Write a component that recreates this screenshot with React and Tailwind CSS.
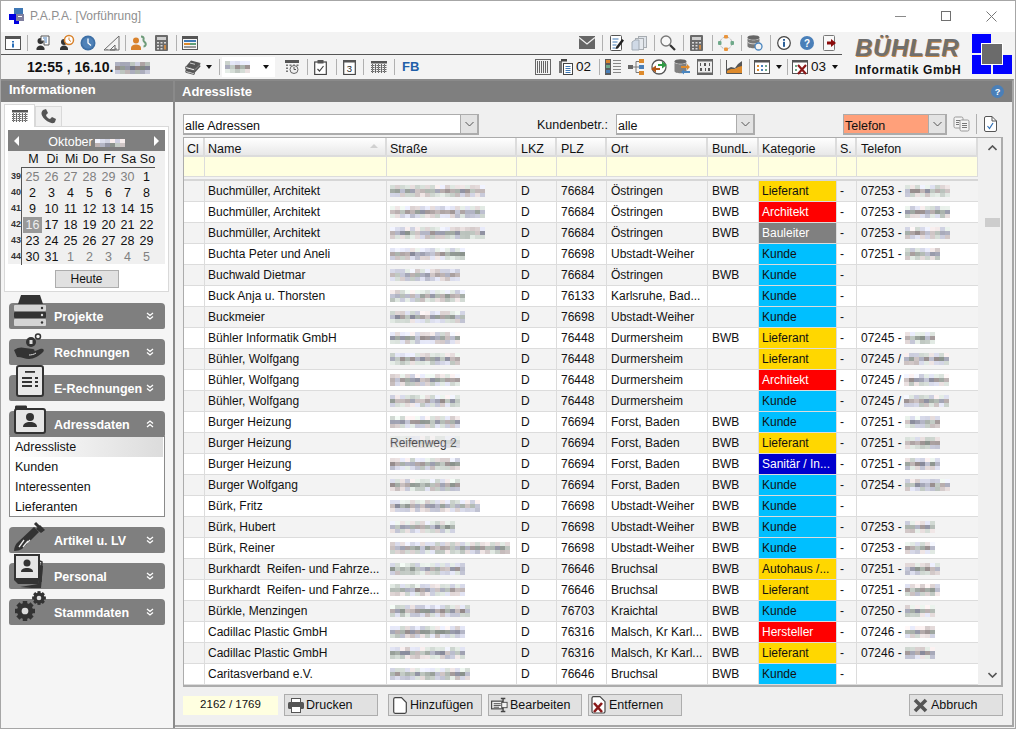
import React from 'react';

const COLS = [
  'w-[21px]', 'w-[182px]', 'w-[130px]', 'w-[40px]', 'w-[50px]',
  'w-[101px]', 'w-[51px]', 'w-[78px]', 'w-[20px]', 'w-[121px]',
];
const PADS = ['pl-[3px]', 'pl-[3px]', 'pl-[3px]', 'pl-[4px]', 'pl-[4px]', 'pl-[4px]', 'pl-[4px]', 'pl-[3px]', 'pl-[3px]', 'pl-[4px]'];
const HEADS = ['Cl', 'Name', 'Straße', 'LKZ', 'PLZ', 'Ort', 'BundL.', 'Kategorie', 'S.', 'Telefon'];

const KAT = {
  L: { label: 'Lieferant', cls: 'bg-[#ffd700] text-[#111]' },
  A: { label: 'Architekt', cls: 'bg-[#ff0000] text-white' },
  B: { label: 'Bauleiter', cls: 'bg-[#808080] text-white' },
  K: { label: 'Kunde', cls: 'bg-[#00bfff] text-[#111]' },
  S: { label: 'Sanitär / In...', cls: 'bg-[#0000cd] text-white' },
  H: { label: 'Autohaus /...', cls: 'bg-[#ffd700] text-[#111]' },
  R: { label: 'Hersteller', cls: 'bg-[#ff0000] text-white' },
};

const ROWS = [
  ['Buchmüller, Architekt', 95, '76684', 'Östringen', 'BWB', 'L', '07253 -', 45],
  ['Buchmüller, Architekt', 95, '76684', 'Östringen', 'BWB', 'A', '07253 -', 45],
  ['Buchmüller, Architekt', 95, '76684', 'Östringen', 'BWB', 'B', '07253 -', 45],
  ['Buchta Peter und Aneli', 75, '76698', 'Ubstadt-Weiher', '', 'K', '07251 -', 35],
  ['Buchwald Dietmar', 70, '76684', 'Östringen', 'BWB', 'K', '', 0],
  ['Buck Anja u. Thorsten', 75, '76133', 'Karlsruhe, Bad...', '', 'K', '', 0],
  ['Buckmeier', 75, '76698', 'Ubstadt-Weiher', '', 'K', '', 0],
  ['Bühler Informatik GmbH', 70, '76448', 'Durmersheim', 'BWB', 'L', '07245 -', 30],
  ['Bühler, Wolfgang', 70, '76448', 'Durmersheim', '', 'L', '07245 /', 45],
  ['Bühler, Wolfgang', 70, '76448', 'Durmersheim', '', 'A', '07245 /', 45],
  ['Bühler, Wolfgang', 70, '76448', 'Durmersheim', '', 'K', '07245 /', 45],
  ['Burger Heizung', 70, '76694', 'Forst, Baden', 'BWB', 'K', '07251 -', 35],
  ['Burger Heizung', 70, '76694', 'Forst, Baden', 'BWB', 'L', '07251 -', 35],
  ['Burger Heizung', 70, '76694', 'Forst, Baden', 'BWB', 'S', '07251 -', 35],
  ['Burger Wolfgang', 70, '76694', 'Forst, Baden', 'BWB', 'K', '07254 -', 45],
  ['Bürk, Fritz', 90, '76698', 'Ubstadt-Weiher', 'BWB', 'K', '', 0],
  ['Bürk, Hubert', 65, '76698', 'Ubstadt-Weiher', 'BWB', 'K', '07253 -', 30],
  ['Bürk, Reiner', 120, '76698', 'Ubstadt-Weiher', 'BWB', 'K', '07253 -', 30],
  ['Burkhardt  Reifen- und Fahrze...', 75, '76646', 'Bruchsal', 'BWB', 'H', '07251 -', 35],
  ['Burkhardt  Reifen- und Fahrze...', 75, '76646', 'Bruchsal', 'BWB', 'L', '07251 -', 35],
  ['Bürkle, Menzingen', 80, '76703', 'Kraichtal', 'BWB', 'K', '07250 -', 30],
  ['Cadillac Plastic GmbH', 75, '76316', 'Malsch, Kr Karl...', 'BWB', 'R', '07246 -', 30],
  ['Cadillac Plastic GmbH', 75, '76316', 'Malsch, Kr Karl...', 'BWB', 'L', '07246 -', 30],
  ['Caritasverband e.V.', 80, '76646', 'Bruchsal', 'BWB', 'K', '', 0],
];

const WEEKS = [
  [39, [25, 26, 27, 28, 29, 30, 1]],
  [40, [2, 3, 4, 5, 6, 7, 8]],
  [41, [9, 10, 11, 12, 13, 14, 15]],
  [42, [16, 17, 18, 19, 20, 21, 22]],
  [43, [23, 24, 25, 26, 27, 28, 29]],
  [44, [30, 31, 1, 2, 3, 4, 5]],
];

// pixelated stand-in for the censored text
function Mosaic({ w, seed = 1, h = 3, dark = false }) {
  const cols = Math.round(w / 5);
  const cells = [];
  for (let y = 0; y < h; y++) {
    for (let x = 0; x < cols; x++) {
      const n = Math.abs(Math.sin((x + 1) * 12.9898 + (y + 1) * 78.233 + seed * 3.7) * 43758.5453) % 1;
      const mid = y === 1;
      const base = dark ? (mid ? 95 : 165) : mid ? 140 : y === 0 ? 205 : 190;
      const spread = mid ? 60 : 45;
      const v = Math.round(base + n * spread);
      const tint = Math.round(n * 100) % 3;
      const r = v + (tint === 0 ? 8 : -4);
      const g = v + (tint === 2 ? 4 : -2);
      const b = v + (tint === 1 ? 14 : -2);
      cells.push(<span key={`${x}-${y}`} className="block w-[5px] h-[4px]" style={{ background: `rgb(${r},${g},${b})` }} />);
    }
  }
  return (
    <span className="inline-grid align-middle" style={{ gridTemplateColumns: `repeat(${cols}, 5px)` }}>
      {cells}
    </span>
  );
}

function Sep({ className = '' }) {
  return <span className={`block w-px h-[16px] bg-[#b0b0b0] shrink-0 ${className}`} />;
}

function Ico({ className = '', children, vb = '0 0 16 16' }) {
  return (
    <svg viewBox={vb} className={`block shrink-0 ${className}`} fill="none">
      {children}
    </svg>
  );
}

const Caret = ({ className = '' }) => (
  <span className={`block w-0 h-0 border-l-[3.5px] border-r-[3.5px] border-t-[4px] border-l-transparent border-r-transparent border-t-[#111] shrink-0 ${className}`} />
);

/* ---- toolbar icons ---- */
const Win = () => (
  <Ico className="w-[16px] h-[14px]" vb="0 0 16 14">
    <rect x=".5" y=".5" width="15" height="13" fill="#fff" stroke="#555" />
    <rect x="0" y="0" width="16" height="3" fill="#555" />
    <rect x="7" y="5" width="2" height="1.5" fill="#2a6fb8" />
    <rect x="7" y="7.5" width="2" height="4" fill="#2a6fb8" />
  </Ico>
);
const PersonDoc = ({ accent = '#4a7fb8' }) => (
  <Ico className="w-[16px] h-[17px]" vb="0 0 16 17">
    <circle cx="5.5" cy="7" r="3" fill="#333" />
    <path d="M1.5 16v-1.5c0-1.5 2-3 4-3s4 1.500 4 3V16z" fill="#333" />
    <path d="M6 2h8v9H9V7H6z" fill="#fff" stroke="#555" />
    <path d="M8 4h4M9 6h3M10 8h2" stroke={accent} />
  </Ico>
);
const PersonClock = () => (
  <Ico className="w-[16px] h-[17px]" vb="0 0 16 17">
    <circle cx="5" cy="8" r="3" fill="#333" />
    <path d="M1 16v-1.500c0-1.500 2-3 4-3s4 1.500 4 3V16z" fill="#333" />
    <circle cx="10" cy="6" r="4.500" fill="#fff" stroke="#d9822b" strokeWidth="1.500" />
    <path d="M10 3.500V6l2 1.500" stroke="#d9822b" />
  </Ico>
);
const Clock = () => (
  <Ico className="w-[16px] h-[16px]">
    <circle cx="8" cy="8" r="7.500" fill="#3d6fa5" />
    <circle cx="8" cy="8" r="5.800" fill="#4f82b8" />
    <path d="M8 3.500V8l3 2.500" stroke="#fff" strokeWidth="1.300" />
  </Ico>
);
const Ruler = () => (
  <Ico className="w-[17px] h-[16px]" vb="0 0 17 16">
    <path d="M1 15L16 1v14z" stroke="#6a6a6a" />
    <path d="M7 15l5-5v5z" stroke="#6a6a6a" />
    <path d="M13 15v-2M10 15v-1M4 15v-1" stroke="#6a6a6a" />
  </Ico>
);
const PersonOrange = () => (
  <Ico className="w-[16px] h-[16px]">
    <circle cx="5" cy="5.500" r="3" fill="#d9822b" />
    <path d="M0 15v-2c0-2 2-3.500 5-3.500s5 1.500 5 3.500v2z" fill="#d9822b" />
    <path d="M10 1.500c2 0 3 1 2.500 3-.4 1.500.5 2 1.500 3 1.500 1.500.5 4-1.500 4" stroke="#6e9b7a" strokeWidth="2" />
  </Ico>
);
const Calc = ({ size = 'w-[13px] h-[16px]' }) => (
  <Ico className={size} vb="0 0 13 16">
    <rect x="0" y="0" width="13" height="16" rx="1" fill="#6a6a6a" />
    <rect x="2" y="2" width="9" height="3" fill="#cfcfcf" />
    <path d="M2 7h2v1.500H2zM5.500 7h2v1.500h-2zM9 7h2v1.500H9zM2 10h2v1.500H2zM5.500 10h2v1.500h-2zM2 13h2v1.500H2zM5.500 13h2v1.500h-2z" fill="#d8d8d8" />
    <path d="M9 10h2v4.500H9z" fill="#c98a4a" />
  </Ico>
);
const Planner = () => (
  <Ico className="w-[16px] h-[14px]" vb="0 0 16 14">
    <rect x=".5" y=".5" width="15" height="13" fill="#f6f6f6" stroke="#555" />
    <rect x="0" y="0" width="16" height="3" fill="#555" />
    <rect x="2" y="4" width="12" height="2" fill="#3e78b5" />
    <rect x="2" y="7" width="6" height="2" fill="#dd8a2c" />
    <rect x="8" y="7" width="6" height="2" fill="#5e9e78" />
    <rect x="2" y="10" width="12" height="2" fill="#999" />
  </Ico>
);
const Mail = () => (
  <Ico className="w-[16px] h-[13px]" vb="0 0 16 13">
    <rect width="16" height="13" fill="#666" />
    <path d="M0 1.500L8 8l8-6.500" stroke="#f3f3f3" strokeWidth="1.200" />
  </Ico>
);
const NoteEdit = () => (
  <Ico className="w-[14px] h-[16px]" vb="0 0 14 16">
    <rect x=".5" y=".5" width="11" height="15" rx="1" fill="#fff" stroke="#555" />
    <path d="M2.500 4h6M2.500 7h5M2.500 10h4M2.500 13h3" stroke="#3e78b5" />
    <path d="M6 12L12 4l2 1.500L8 13.500 5.500 14z" fill="#222" />
  </Ico>
);
const Copies = () => (
  <Ico className="w-[16px] h-[16px]">
    <rect x="7.500" y="1.500" width="8" height="11" fill="#dfe4ea" stroke="#a7acb1" />
    <rect x="4.500" y="3.500" width="8" height="11" fill="#e5e9ee" stroke="#a7acb1" />
    <path d="M1 7l3-2h4v10H1z" fill="#cfd9e6" stroke="#a2abb5" />
  </Ico>
);
const Search = () => (
  <Ico className="w-[16px] h-[16px]">
    <circle cx="6" cy="6" r="5" fill="#f8f8f8" stroke="#777" strokeWidth="1.300" />
    <path d="M10 10l5 5" stroke="#333" strokeWidth="2.200" />
  </Ico>
);
const Ring = () => (
  <Ico className="w-[16px] h-[16px]">
    <circle cx="8" cy="8" r="6" stroke="#bcbcbc" strokeDasharray="3 1" />
    <rect x="6" y="0" width="4" height="3.500" rx="1" fill="#e8943c" />
    <rect x="6" y="12.500" width="4" height="3.500" rx="1" fill="#e8943c" />
    <rect x="0" y="6" width="3.500" height="4" rx="1" fill="#6fa98a" />
    <rect x="12.500" y="6" width="3.500" height="4" rx="1" fill="#6fa98a" />
  </Ico>
);
const DbRefresh = () => (
  <Ico className="w-[16px] h-[16px]">
    <ellipse cx="6.500" cy="2.500" rx="6" ry="2.300" fill="#666" />
    <path d="M.5 3v8c0 1.300 2.700 2.300 6 2.300s6-1 6-2.300V3c0 1.300-2.700 2.300-6 2.300S.5 4.300.5 3z" fill="#777" />
    <path d="M.5 6.500c0 1.300 2.700 2.300 6 2.300s6-1 6-2.300" stroke="#ddd" />
    <circle cx="11.500" cy="11.500" r="3.500" fill="#f3f3f3" stroke="#4a86c0" strokeWidth="1.300" />
  </Ico>
);
const InfoC = () => (
  <Ico className="w-[14px] h-[14px]" vb="0 0 14 14">
    <circle cx="7" cy="7" r="6.300" stroke="#444" strokeWidth="1.200" fill="#fff" />
    <rect x="6" y="3" width="2" height="1.800" fill="#2a5f98" />
    <rect x="6" y="5.800" width="2" height="5" fill="#2a5f98" />
  </Ico>
);
const Help = ({ size = 'w-[14px] h-[14px]' }) => (
  <svg viewBox="0 0 14 14" className={`block shrink-0 ${size}`}>
    <circle cx="7" cy="7" r="7" fill="#4a7fb8" />
    <text x="7" y="10.500" textAnchor="middle" fontSize="10" fontWeight="700" fill="#fff" fontFamily="Liberation Sans, sans-serif">?</text>
  </svg>
);
const ExitI = () => (
  <Ico className="w-[13px] h-[16px]" vb="0 0 13 16">
    <rect x=".5" y=".5" width="11" height="15" rx="1" fill="#f8f8f8" stroke="#777" />
    <path d="M4 6.500h4V4l5 4-5 4V9.500H4z" fill="#8b0a0a" />
  </Ico>
);
const Books = () => (
  <Ico className="w-[16px] h-[15px]" vb="0 0 16 15">
    <path d="M6 .5L15.500 3 10 9 .8 6.500z" fill="#555" />
    <path d="M.8 6.500L10 9l-.8 1.800L.5 8.500z" fill="#eee" stroke="#444" strokeWidth=".8" />
    <path d="M15.500 3L10 9l-.8 1.800L15 5z" fill="#444" />
    <path d="M.5 8.500L9.200 10.800 15 5l.5 1.500L9.500 13 .8 10.700z" fill="#555" />
    <path d="M.8 10.700L9.500 13l-.4 1.500L.8 12.300z" fill="#eee" stroke="#444" strokeWidth=".8" />
    <path d="M5 3l5 1.300" stroke="#ccc" />
  </Ico>
);
const CalClock = () => (
  <Ico className="w-[15px] h-[14px]" vb="0 0 15 14">
    <rect x="0" y="0" width="14" height="3" fill="#555" />
    <path d="M1 4.500h2v1.500H1zM4.500 4.500h2v1.500h-2zM8 4.500h2v1.500H8zM11.500 4.500h2v1.500h-2zM1 7.500h2V9H1zM1 10.500h2V12H1z" fill="#777" />
    <circle cx="9" cy="9.500" r="4" fill="#eee" stroke="#666" />
    <path d="M9 7v2.500h2" stroke="#555" />
  </Ico>
);
const ClipCheck = () => (
  <Ico className="w-[13px] h-[15px]" vb="0 0 13 15">
    <rect x=".7" y="2" width="11.600" height="12.500" fill="#fff" stroke="#444" strokeWidth="1.200" />
    <rect x="3.500" y="0" width="6" height="3.500" fill="#555" />
    <path d="M3.500 9l2 2L9.500 6" stroke="#444" strokeWidth="1.200" />
  </Ico>
);
const Cal3 = () => (
  <svg viewBox="0 0 13 15" className="block w-[13px] h-[15px] shrink-0">
    <rect x=".7" y="1" width="11.600" height="13.500" fill="#fff" stroke="#444" strokeWidth="1.200" />
    <rect x="0" y="0" width="13" height="2.500" fill="#555" />
    <text x="6.500" y="12" textAnchor="middle" fontSize="9.500" fill="#222" fontFamily="Liberation Sans, sans-serif">3</text>
  </svg>
);
const Grid16 = () => (
  <Ico className="w-[16px] h-[12px]" vb="0 0 16 12">
    <rect width="16" height="2.500" fill="#555" />
    <path d="M0 4.500h16M0 6.500h16M0 8.500h16M0 10.500h16M1.500 3v9M4.500 3v9M7.500 3v9M10.500 3v9M13.500 3v9" stroke="#666" strokeDasharray="1.500 .5" />
  </Ico>
);
const Barcode = () => (
  <Ico className="w-[16px] h-[16px]">
    <rect x=".5" y=".5" width="15" height="15" stroke="#666" />
    <path d="M2.500 2v12M4.500 2v12M6.500 2v12M8.500 2v12M10.500 2v12M12.500 2v12" stroke="#666" />
  </Ico>
);
const ClipList = () => (
  <Ico className="w-[15px] h-[16px]" vb="0 0 15 16">
    <path d="M1 2h3v12H1z" fill="#777" />
    <rect x="3" y="0" width="6" height="2.500" fill="#444" />
    <rect x="5.500" y="4.500" width="9" height="11" fill="#fff" stroke="#444" />
    <path d="M7.500 7.500h5M7.500 9.500h5M7.500 11.500h5M7.500 13.500h5" stroke="#3e78b5" />
  </Ico>
);
const ListCol = () => (
  <Ico className="w-[16px] h-[16px]">
    <rect width="6" height="16" fill="#5c5c5c" />
    <rect x="1" y="1" width="4" height="3" fill="#d9822b" />
    <rect x="1" y="6" width="4" height="3" fill="#6fa98a" />
    <rect x="1" y="11" width="4" height="3" fill="#4a7fb8" />
    <path d="M8 1.500h8M8 4.500h8M8 7.500h8M8 10.500h8M8 13.500h8" stroke="#888" />
  </Ico>
);
const Tree = () => (
  <Ico className="w-[16px] h-[16px]">
    <rect x="0" y="6" width="5" height="4" fill="#666" />
    <path d="M5 8h3M8 2.500v11M8 2.500h3M8 8h3M8 13.500h3" stroke="#777" />
    <rect x="11" y="0" width="5" height="4" fill="#dd8a2c" />
    <rect x="11" y="6" width="5" height="4" fill="#4a7fb8" />
    <rect x="11" y="12" width="5" height="4" fill="#dd8a2c" />
  </Ico>
);
const GlobeSwap = () => (
  <Ico className="w-[16px] h-[16px]">
    <circle cx="8" cy="8" r="7" fill="#fff" stroke="#555" strokeWidth="1.300" />
    <path d="M7 5h4V2.500L16 6l-5 3.500V7H7z" fill="#2e9a44" />
    <path d="M9 9H5V6.500L0 10l5 3.500V11h4z" fill="#b45a1a" />
  </Ico>
);
const DbSwap = () => (
  <Ico className="w-[16px] h-[16px]">
    <ellipse cx="6.500" cy="2.500" rx="6" ry="2.300" fill="#666" />
    <path d="M.5 3v9c0 1.300 2.700 2.300 6 2.300s6-1 6-2.300V3c0 1.300-2.700 2.300-6 2.300S.5 4.300.5 3z" fill="#808080" />
    <path d="M7 7h6V5l3 3-3 3V9H7z" fill="#dd8a2c" />
    <path d="M16 12h-6v-1.500L7 13l3 2.500V14h6z" fill="#4a86c0" />
  </Ico>
);
const Binary = () => (
  <svg viewBox="0 0 16 16" className="block w-[16px] h-[16px] shrink-0">
    <rect x=".5" y=".5" width="15" height="15" fill="#ececec" stroke="#666" />
    <rect width="16" height="2.500" fill="#666" />
    <rect y="13.500" width="16" height="2.500" fill="#666" />
    <path d="M3 4h1v3H3zM7 4h2v3H7zM12 4h1v3h-1zM3 9h2v3H3zM8 9h1v3H8zM11 9h2v3h-2z" fill="#555" />
  </svg>
);
const AreaC = () => (
  <Ico className="w-[16px] h-[14px]" vb="0 0 16 14">
    <path d="M.5 0v13.500H16" stroke="#555" />
    <path d="M1 9l4-2 4 1 3-4 4-3v6l-4 1-4 1-3 1-4 1z" fill="#555" />
    <path d="M1 13V11l4-2 4 0 3-2 4-1v7z" fill="#dd8a2c" />
  </Ico>
);
const TableI = () => (
  <Ico className="w-[16px] h-[14px]" vb="0 0 16 14">
    <rect x=".5" y=".5" width="15" height="13" fill="#fff" stroke="#555" />
    <rect width="16" height="2.500" fill="#555" />
    <path d="M3 5h2v2H3zM3 9h2v2H3z" fill="#dd8a2c" />
    <path d="M7 5h2v2H7zM7 9h2v2H7z" fill="#4a7fb8" />
    <path d="M11 5h2v2h-2zM11 9h2v2h-2z" fill="#6fa98a" />
  </Ico>
);
const TableX = () => (
  <Ico className="w-[16px] h-[15px]" vb="0 0 16 15">
    <rect x=".5" y=".5" width="15" height="13" fill="#fff" stroke="#555" />
    <rect width="16" height="2.500" fill="#555" />
    <path d="M3 5h2v2H3zM3 9h2v2H3z" fill="#6fa98a" />
    <path d="M6 5l8 9M14 5l-8 9" stroke="#8b1a1a" strokeWidth="2.200" />
  </Ico>
);

/* ---- sidebar icons ---- */
const SideProjekte = () => (
  <Ico className="w-[32px] h-[32px]" vb="0 0 32 32">
    <path d="M4 9L7 0h19l3 9z" fill="#333" />
    <rect x="0" y="10" width="32" height="6" rx="1" fill="#d4d4d4" />
    <rect x="0" y="17" width="32" height="6" rx="1" fill="#333" />
    <rect x="0" y="24" width="32" height="7" rx="1" fill="#d4d4d4" />
    <circle cx="28" cy="13" r="1.200" fill="#333" />
    <circle cx="28" cy="20" r="1.200" fill="#ddd" />
    <circle cx="28" cy="27.500" r="1.200" fill="#333" />
  </Ico>
);
const SideRechnung = () => (
  <Ico className="w-[34px] h-[30px]" vb="0 0 34 30">
    <circle cx="17" cy="9" r="5" fill="#333" />
    <rect x="15.500" y="7" width="3" height="4" fill="#ddd" />
    <circle cx="24" cy="3.500" r="2.500" stroke="#333" strokeWidth="1.500" />
    <path d="M0 17c4-3 8-3 11-2l8 1c2 0 2 3 0 3h-5c5 0 8-1 12-3 3-1 5 1 3 3-4 4-9 7-14 7-4 0-7-2-12-2H3z" fill="#333" />
    <path d="M15 22c2 0 5-.5 7-2" stroke="#ddd" />
  </Ico>
);
const SideERech = () => (
  <Ico className="w-[28px] h-[32px]" vb="0 0 28 32">
    <rect x="1" y="1" width="26" height="30" rx="2" fill="#e8e8e8" stroke="#333" strokeWidth="2" />
    <rect x="9" y="6" width="10" height="1.800" fill="#333" />
    <path d="M6 12h10v2H6zM6 16h10v2H6zM6 20h10v2H6z" fill="#333" />
    <path d="M19 12h3v2h-3zM19 16h3v2h-3zM19 20h3v2h-3z" fill="#333" />
  </Ico>
);
const SideAdress = () => (
  <Ico className="w-[32px] h-[29px]" vb="0 0 32 29">
    <path d="M1 4V2c0-1 .5-1.500 1.500-1.500h9C12.500.5 13 1 13 2v2z" fill="#333" />
    <rect x="1" y="4" width="30" height="24" rx="2" fill="#e6e6e6" stroke="#333" strokeWidth="2" />
    <circle cx="16" cy="12" r="4" fill="#333" />
    <path d="M9 22c0-3.500 3-5 7-5s7 1.500 7 5z" fill="#333" />
  </Ico>
);
const SideArtikel = () => (
  <Ico className="w-[32px] h-[31px]" vb="0 0 32 31">
    <path d="M0 31c0-4 2-7 3-8L20 7l5 5L8 29c-2 1-5 2-8 2z" fill="#333" />
    <path d="M5 27l5-7M9 27l5-6M13 23l3-3" stroke="#e8e8e8" strokeWidth="1.300" />
    <path d="M21 3l8 8" stroke="#333" strokeWidth="3" />
    <path d="M22 9l4-4 5 5-4 3z" fill="#333" />
  </Ico>
);
const SidePersonal = () => (
  <Ico className="w-[30px] h-[35px]" vb="0 0 30 35">
    <path d="M6 33c8 1 16 1 21 1l2-22-3-1-2 19z" fill="#333" />
    <path d="M26 7l2 1-1 20" stroke="#333" strokeWidth="1.500" />
    <rect x="1" y="1" width="24" height="24" fill="#e6e6e6" stroke="#333" strokeWidth="2" />
    <circle cx="13" cy="9" r="3.500" fill="#333" />
    <path d="M7 18c0-3 2.500-4 6-4s6 1 6 4z" fill="#333" />
    <path d="M0 26h25l-1 4H4z" fill="#333" />
  </Ico>
);
const Gear = ({ cx, cy, r }) => {
  const teeth = [0, 45, 90, 135].map((a) => (
    <rect key={a} x={cx - r * 0.28} y={cy - r * 1.25} width={r * 0.56} height={r * 2.5} fill="#333" transform={`rotate(${a} ${cx} ${cy})`} />
  ));
  return (
    <g>
      {teeth}
      <circle cx={cx} cy={cy} r={r} fill="#333" />
      <circle cx={cx} cy={cy} r={r * 0.42} fill="#ddd" />
    </g>
  );
};
const SideStamm = () => (
  <Ico className="w-[32px] h-[31px]" vb="0 0 32 31">
    <Gear cx={11} cy={20} r={8} />
    <Gear cx={25} cy={7} r={5.500} />
  </Ico>
);

const Chevrons = ({ up = false }) => (
  <Ico className="w-[8px] h-[8px]" vb="0 0 8 8">
    {up ? (
      <path d="M1 3.500L4 1l3 2.500M1 7L4 4.500 7 7" stroke="#fff" strokeWidth="1.300" />
    ) : (
      <path d="M1 1l3 2.500L7 1M1 4.500L4 7l3-2.500" stroke="#fff" strokeWidth="1.300" />
    )}
  </Ico>
);

function SideBar({ label, icon, iconCls, up = false, className = '' }) {
  return (
    <div className={`relative h-[26px] bg-[#7f7f7f] rounded-t-[4px] rounded-b-[2px] flex items-center pl-[45px] pr-[11px] justify-between ${className}`}>
      <span className={`absolute ${iconCls}`}>{icon}</span>
      <span className="text-[12.5px] font-bold text-white mt-[3px] whitespace-nowrap">{label}</span>
      <Chevrons up={up} />
    </div>
  );
}

function Combo({ className = '', label, inputCls = 'bg-white' }) {
  return (
    <div className={`h-[21px] flex border-2 border-[#acacac] border-l-[1px] border-t-[1px] ${className}`}>
      <div className={`flex-1 flex items-center pl-[1px] pt-[6px] text-[12.5px] text-[#111] leading-none ${inputCls}`}>{label}</div>
      <div className="w-[17px] bg-[#e3e3e3] border-l border-[#acacac] flex items-center justify-center">
        <Ico className="w-[9px] h-[6px]" vb="0 0 9 6">
          <path d="M.5 1L4.500 5l4-4" stroke="#555" />
        </Ico>
      </div>
    </div>
  );
}

function Btn({ icon, label, className = '' }) {
  return (
    <button className={`w-[94px] h-[22px] bg-[#e1e1e1] border border-[#adadad] flex items-center text-[12.5px] text-[#111] ${className}`}>
      {icon}
      <span className="whitespace-nowrap">{label}</span>
    </button>
  );
}

function Cell({ i, className = '', children }) {
  return (
    <div className={`${COLS[i]} ${PADS[i]} shrink-0 h-full border-r border-[#dcdcdc] flex items-center overflow-hidden whitespace-pre ${className}`}>
      {children}
    </div>
  );
}

function Row({ r, idx }) {
  const [name, street, plz, ort, bl, kat, tel, telW] = r;
  const k = KAT[kat];
  return (
    <div className={`flex h-[21px] border-b border-[#dcdcdc] text-[12px] text-[#111] ${idx % 2 === 0 ? 'bg-[#f3f3f3]' : 'bg-white'}`}>
      <Cell i={0} />
      <Cell i={1}>{name}</Cell>
      <Cell i={2}>
        {idx === 12 ? (
          <span className="relative">
            Reifenweg 2
            <span className="absolute left-0 top-[2px] opacity-40 flex"><Mosaic w={70} seed={idx + 1} /></span>
          </span>
        ) : (
          <Mosaic w={street} seed={idx + 1} />
        )}
      </Cell>
      <Cell i={3}>D</Cell>
      <Cell i={4}>{plz}</Cell>
      <Cell i={5}>{ort}</Cell>
      <Cell i={6}>{bl}</Cell>
      <Cell i={7} className={k.cls}>{k.label}</Cell>
      <Cell i={8}>-</Cell>
      <Cell i={9} className="gap-[3px] border-r-0">
        {tel}
        {telW > 0 && <Mosaic w={telW} seed={idx + 40} />}
      </Cell>
    </div>
  );
}

export default function App() {
  return (
    <div className="w-[1016px] h-[729px] overflow-hidden bg-[#f3f3f3] border border-[#a6a6a6] flex flex-col font-['Liberation_Sans',Arial,sans-serif] text-[#111]">
      {/* title bar */}
      <div className="h-[31px] pb-[1px] bg-white flex items-center shrink-0">
        <Ico className="w-[16px] h-[17px] ml-[8px]" vb="0 0 16 17">
          <rect x="5" y="0" width="9" height="7" fill="#3f78b5" />
          <rect x="0" y="6" width="9" height="6" fill="#0000e0" />
          <rect x="5" y="11" width="5" height="5" fill="#0000e0" />
          <rect x="7" y="6" width="8" height="7" fill="#7f7f9f" />
          <rect x="9" y="8" width="4" height="1" fill="#fff" />
        </Ico>
        <span className="ml-[5px] text-[12px] text-[#8f8f8f]">P.A.P.A. [Vorführung]</span>
        <div className="ml-auto flex items-center text-[#808080]">
          <span className="block w-[11px] h-px bg-[#8a8a8a] mr-[35px]" />
          <span className="block w-[10px] h-[10px] border border-[#707070] mr-[35px]" />
          <Ico className="w-[11px] h-[11px] mr-[18px]" vb="0 0 11 11">
            <path d="M.5.5l10 10M10.500.5l-10 10" stroke="#777" />
          </Ico>
        </div>
      </div>

      {/* toolbars + logo */}
      <div className="h-[47px] flex shrink-0">
        <div className="w-[841px] flex flex-col shrink-0">
          <div className="h-[24px] pb-[1px] border-b border-[#555] flex items-center">
            <span className="ml-[4px]"><Win /></span>
            <Sep className="ml-[6px]" />
            <span className="ml-[7px]"><PersonDoc /></span>
            <span className="ml-[8px]"><PersonClock /></span>
            <span className="ml-[5px]"><Clock /></span>
            <span className="ml-[7px]"><Ruler /></span>
            <Sep className="ml-[5px]" />
            <span className="ml-[5px]"><PersonOrange /></span>
            <span className="ml-[8px]"><Calc /></span>
            <Sep className="ml-[8px]" />
            <span className="ml-[5px]"><Planner /></span>
            <span className="ml-[381px]"><Mail /></span>
            <Sep className="ml-[7px]" />
            <span className="ml-[7px]"><NoteEdit /></span>
            <span className="ml-[7px]"><Copies /></span>
            <Sep className="ml-[7px]" />
            <span className="ml-[5px]"><Search /></span>
            <Sep className="ml-[7px]" />
            <span className="ml-[6px]"><Calc /></span>
            <Sep className="ml-[9px]" />
            <span className="ml-[5px]"><Ring /></span>
            <Sep className="ml-[7px]" />
            <span className="ml-[5px]"><DbRefresh /></span>
            <Sep className="ml-[7px]" />
            <span className="ml-[6px]"><InfoC /></span>
            <span className="ml-[9px]"><Help /></span>
            <span className="ml-[9px]"><ExitI /></span>
          </div>
          <div className="flex-1 flex items-center">
            <span className="ml-[26px] w-[88px] text-[14px] font-bold whitespace-nowrap">12:55 , 16.10.</span>
            <span><Mosaic w={35} seed={5} dark /></span>
            <span className="ml-[35px]"><Books /></span>
            <Caret className="ml-[5px]" />
            <Sep className="ml-[7px]" />
            <div className="ml-[2px] w-[53px] h-[20px] bg-white flex items-center pl-[3px]"><Mosaic w={25} seed={9} /></div>
            <Caret className="-ml-[12px]" />
            <span className="ml-[16px]"><CalClock /></span>
            <Sep className="ml-[7px]" />
            <span className="ml-[6px]"><ClipCheck /></span>
            <Sep className="ml-[9px]" />
            <span className="ml-[6px]"><Cal3 /></span>
            <Sep className="ml-[7px]" />
            <span className="ml-[7px]"><Grid16 /></span>
            <Sep className="ml-[7px]" />
            <span className="ml-[7px] w-[20px] text-[13px] font-bold text-[#1f5fa8]">FB</span>
            <span className="ml-[113px]"><Barcode /></span>
            <span className="ml-[7px]"><ClipList /></span>
            <span className="ml-[3px] text-[13.5px] w-[16px]">02</span>
            <Sep className="ml-[7px]" />
            <span className="ml-[5px]"><ListCol /></span>
            <span className="ml-[7px]"><Tree /></span>
            <span className="ml-[7px]"><GlobeSwap /></span>
            <span className="ml-[7px]"><DbSwap /></span>
            <span className="ml-[7px]"><Binary /></span>
            <Sep className="ml-[7px]" />
            <span className="ml-[5px]"><AreaC /></span>
            <Sep className="ml-[7px]" />
            <span className="ml-[4px]"><TableI /></span>
            <Caret className="ml-[6px]" />
            <Sep className="ml-[5px]" />
            <span className="ml-[4px]"><TableX /></span>
            <span className="ml-[3px] text-[13.5px] w-[16px]">03</span>
            <Caret className="ml-[5px]" />
          </div>
        </div>
        <div className="flex-1 flex items-start">
          <div className="ml-[13px] w-[116px] flex flex-col">
            <span className="text-[24px] leading-[26px] mt-[3px] font-bold italic text-[#6f6f6f] tracking-[0.7px] [text-shadow:1px_1px_0_#c98a4a] whitespace-nowrap">BÜHLER</span>
            <span className="text-[12px] leading-[14px] mt-[2px] font-bold text-[#111] tracking-[0.6px] whitespace-nowrap">Informatik GmbH</span>
          </div>
          {/* logo squares */}
          <Ico className="w-[40px] h-[40px] ml-[1px] mt-[2px]" vb="0 0 40 40">
            <rect x="0" y="0" width="19" height="19" fill="#0000ff" />
            <rect x="0" y="21" width="19" height="19" fill="#0000ff" />
            <rect x="21" y="21" width="19" height="19" fill="#0000ff" />
            <rect x="9.500" y="9.500" width="21" height="21" fill="#6b6b6b" stroke="#fff" strokeWidth="1" />
          </Ico>
        </div>
      </div>

      {/* body */}
      <div className="flex-1 flex min-h-0">
        {/* sidebar */}
        <div className="w-[174px] shrink-0 border-r-2 border-t-2 border-[#8a8a8a] bg-[#f5f5f5]">
          <div className="h-[21px] pb-[3px] bg-[#7f7f7f] text-white font-bold text-[13px] flex items-center pl-[8px]">Informationen</div>

          {/* tabs */}
          <div className="mt-[2px] ml-[3px] flex items-end h-[22px] relative z-10">
            <div className="w-[31px] h-[23px] -mb-px bg-white border border-b-0 border-[#d9d9d9] flex items-center justify-center">
              <Grid16 />
            </div>
            <div className="w-[27px] h-[20px] bg-[#f0f0f0] border border-b-0 border-[#d9d9d9] flex items-center justify-center">
              <Ico className="w-[15px] h-[15px]" vb="0 0 15 15">
                <path d="M2 1l3-1 2 4-2 2c.5 2 2 3.500 4 4l2-2 4 2-1 3c-1 1.500-3 1.500-5 .5C5 12 2.500 9.500 1 6.500 0 4.500 .5 2.500 2 1z" fill="#555" />
              </Ico>
            </div>
          </div>

          <div className="ml-[3px] w-[165px] h-[166px] bg-white border border-[#d9d9d9] p-[3px] flex flex-col items-center">
            <div className="w-[157px] h-[21px] bg-[#7f7f7f] text-white text-[12.5px] flex items-center justify-between px-[6px]">
              <span className="block w-0 h-0 border-y-[5px] border-r-[5px] border-y-transparent border-r-white" />
              <span className="flex items-center gap-[2px] pt-[4px]">Oktober <Mosaic w={30} seed={3} h={2} /></span>
              <span className="block w-0 h-0 border-y-[5px] border-l-[5px] border-y-transparent border-l-white" />
            </div>
            <div className="w-[157px] h-[113px] bg-[#f0f0f0] text-[12.5px] pl-[3px] pt-[1px]">
              <div className="flex h-[15px] items-center pl-[13px]">
                {['M', 'Di', 'Mi', 'Do', 'Fr', 'Sa', 'So'].map((d) => (
                  <span key={d} className="w-[19px] text-center">{d}</span>
                ))}
              </div>
              <div className="flex">
                <div className="w-[9px] pt-[1px] mr-[1px]">
                  {WEEKS.map(([w]) => (
                    <div key={w} className="h-[16px] text-[9px] font-bold leading-[16px] text-[#333]">{w}</div>
                  ))}
                </div>
                <div className="border-l border-t border-[#555] w-[134px] pt-[1px] pl-[1px]">
                  {WEEKS.map(([w, days], wi) => (
                    <div key={w} className="flex h-[16px]">
                      {days.map((d, di) => {
                        const out = (wi === 0 && d > 20) || (wi === 5 && d < 20);
                        const today = d === 16;
                        return (
                          <span
                            key={di}
                            className={`w-[19px] shrink-0 leading-[16px] text-center ${today ? 'bg-[#999] text-[#eee]' : out ? 'text-[#808080]' : 'text-[#111]'}`}
                          >
                            {d}
                          </span>
                        );
                      })}
                    </div>
                  ))}
                </div>
              </div>
            </div>
            <button className="mt-[6px] w-[64px] h-[19px] bg-[#e1e1e1] border border-[#adadad] text-[12px] leading-none">Heute</button>
          </div>

          {/* nav */}
          <div className="ml-[8px] w-[156px] mt-[11px]">
            <SideBar label="Projekte" icon={<SideProjekte />} iconCls="left-[5px] -top-[8px]" />
            <SideBar label="Rechnungen" icon={<SideRechnung />} iconCls="left-[5px] -top-[6px]" className="mt-[10px]" />
            <SideBar label="E-Rechnungen" icon={<SideERech />} iconCls="left-[7px] -top-[10px]" className="mt-[10px]" />
            <SideBar label="Adressdaten" up icon={<SideAdress />} iconCls="left-[5px] -top-[6px]" className="mt-[10px]" />
            <div className="h-[81px] -mt-px relative bg-white border border-[#8a8a8a] border-t-[#7f7f7f] text-[12.5px] text-[#111]">
              <div className="h-[20px] ml-px mr-[1px] leading-[20px] pl-[4px] bg-gradient-to-r from-white to-[#dcdcdc]">Adressliste</div>
              <div className="h-[20px] leading-[20px] pl-[5px]">Kunden</div>
              <div className="h-[20px] leading-[20px] pl-[5px]">Interessenten</div>
              <div className="h-[20px] leading-[20px] pl-[5px]">Lieferanten</div>
            </div>
            <SideBar label="Artikel u. LV" icon={<SideArtikel />} iconCls="left-[5px] -top-[7px]" className="mt-[10px]" />
            <SideBar label="Personal" icon={<SidePersonal />} iconCls="left-[5px] -top-[9px]" className="mt-[10px]" />
            <SideBar label="Stammdaten" icon={<SideStamm />} iconCls="left-[5px] -top-[8px]" className="mt-[10px]" />
          </div>
        </div>

        {/* main */}
        <div className="flex-1 bg-[#f0f0f0] border-t-2 border-r-2 border-b-2 border-[#a6a6a6] border-t-[#8a8a8a] mr-[1px] mb-[1px] min-w-0 flex flex-col">
          <div className="h-[21px] bg-[#7f7f7f] text-white font-bold text-[13px] flex items-center pl-[7px] pr-[8px] justify-between shrink-0">
            <span>Adressliste</span>
            <Help size="w-[13px] h-[13px]" />
          </div>

          {/* filters */}
          <div className="h-[24px] mt-[10px] ml-[8px] flex items-center shrink-0">
            <Combo className="w-[296px]" label="alle Adressen" />
            <span className="ml-[58px] text-[12.5px] w-[79px] whitespace-nowrap pt-[2px]">Kundenbetr.:</span>
            <Combo className="w-[139px]" label="alle" />
            <Combo className="w-[104px] ml-[88px]" label="Telefon" inputCls="bg-[#ffa07a]" />
            <Ico className="w-[17px] h-[16px] ml-[6px]" vb="0 0 17 16">
              <rect x="1" y="1" width="9" height="11" rx="1.500" fill="#f4f4f4" stroke="#9a9a9a" />
              <rect x="7" y="4" width="9" height="11" rx="1.500" fill="#f4f4f4" stroke="#9a9a9a" />
              <path d="M3 4.500h4M3 6.500h3M3 8.500h3M9 7.500h5M9 9.500h5M9 11.500h5" stroke="#777" />
            </Ico>
            <Sep className="ml-[6px] h-[20px]" />
            <Ico className="w-[13px] h-[16px] ml-[7px]" vb="0 0 13 16">
              <path d="M.5 2A1.500 1.500 0 012 .5h6l4.500 4.500v9a1.500 1.500 0 01-1.500 1.500H2A1.500 1.500 0 01.5 14z" fill="#fff" stroke="#555" />
              <path d="M8 .5V5h4.500" stroke="#555" />
              <path d="M3.500 10l2 2.500L9 7" stroke="#2f6fb5" strokeWidth="1.200" />
            </Ico>
          </div>

          {/* table */}
          <div className="ml-[8px] mt-[1px] w-[820px] h-[550px] border-2 border-[#acacac] border-t-[1px] border-l-[1px] bg-[#f0f0f0] flex shrink-0 overflow-hidden">
            <div className="w-[794px] shrink-0 flex flex-col">
              <div className="flex h-[19px] text-[12.5px] text-[#111] shrink-0">
                {HEADS.map((h, i) => (
                  <div key={h} className={`${COLS[i]} ${PADS[i]} shrink-0 relative flex items-center pt-[5px] bg-gradient-to-b from-white to-[#e8e8e8] border-r-2 border-b-2 border-[#dcdcdc] overflow-hidden`}>
                    {h}
                    {h === 'Name' && (
                      <span className="absolute right-[7px] top-[6px] w-0 h-0 border-l-[4px] border-r-[4px] border-b-[4px] border-l-transparent border-r-transparent border-b-[#d0d0d0]" />
                    )}
                  </div>
                ))}
              </div>
              <div className="flex h-[20px] bg-[#ffffe0] border-b border-[#dcdcdc] shrink-0">
                {COLS.map((c, i) => (
                  <div key={i} className={`${c} shrink-0 h-full border-r border-[#dcdcdc]`} />
                ))}
              </div>
              <div className="h-[4px] border-t-2 border-[#f3f3f3] bg-[#d6d6d6] shrink-0" />
              {ROWS.map((r, i) => (
                <Row key={i} r={r} idx={i} />
              ))}
            </div>
            {/* scrollbar */}
            <div className="flex-1 flex flex-col items-center pl-[5px] pt-[7px] pb-[7px]">
              <Ico className="w-[9px] h-[6px]" vb="0 0 9 6">
                <path d="M.5 5l4-4 4 4" stroke="#555" strokeWidth="1.600" />
              </Ico>
              <div className="w-[15px] h-[9px] bg-[#cdcdcd] mt-[67px]" />
              <Ico className="w-[9px] h-[6px] mt-auto" vb="0 0 9 6">
                <path d="M.5 1l4 4 4-4" stroke="#555" strokeWidth="1.600" />
              </Ico>
            </div>
          </div>

          {/* bottom buttons */}
          <div className="ml-[8px] mt-[7px] mr-[9px] flex items-center shrink-0">
            <div className="w-[95px] h-[19px] bg-[#ffffe0] text-[11.5px] flex items-center justify-center">2162 / 1769</div>
            <Btn
              className="ml-[6px] pl-[3px] gap-[2px]"
              label="Drucken"
              icon={
                <Ico className="w-[16px] h-[15px]" vb="0 0 16 15">
                  <rect x="3.500" y=".5" width="9" height="4" fill="#fff" stroke="#555" />
                  <rect x="0" y="4" width="16" height="7" rx="1.500" fill="#555" />
                  <rect x="3.500" y="8.500" width="9" height="6" fill="#fff" stroke="#555" />
                </Ico>
              }
            />
            <Btn
              className="ml-[10px] pl-[4px] gap-[3px]"
              label="Hinzufügen"
              icon={
                <Ico className="w-[14px] h-[17px]" vb="0 0 14 17">
                  <path d="M.7 2A1.500 1.500 0 012.200.7H8.500L13.300 5.500V14.800a1.500 1.500 0 01-1.500 1.500H2.200A1.500 1.500 0 01.7 14.800z" fill="#fff" stroke="#444" strokeWidth="1.200" />
                </Ico>
              }
            />
            <Btn
              className="ml-[6px] pl-[2px] gap-[2px]"
              label="Bearbeiten"
              icon={
                <Ico className="w-[17px] h-[16px]" vb="0 0 19 16">
                  <rect x=".7" y="3.700" width="12" height="8.600" fill="#f2f2f2" stroke="#444" strokeWidth="1.300" />
                  <path d="M3 6.500h8M3 8.500h8M3 10.500h6" stroke="#444" />
                  <path d="M11 .7h5M11 15.300h5M13.500 1v14" stroke="#444" strokeWidth="1.500" />
                  <rect x="12" y="5" width="6" height="6" fill="#f2f2f2" stroke="#444" />
                </Ico>
              }
            />
            <Btn
              className="ml-[6px] pl-[2px] gap-[3px]"
              label="Entfernen"
              icon={
                <Ico className="w-[15px] h-[18px]" vb="0 0 15 18">
                  <path d="M1 2A1.500 1.500 0 012.500.7H9l5 5V15.500a1.500 1.500 0 01-1.500 1.500H2.500A1.500 1.500 0 011 15.500z" fill="#fff" stroke="#444" strokeWidth="1.200" />
                  <path d="M3 7l8 9M11 7l-8 9" stroke="#8b1a1a" strokeWidth="2.600" />
                </Ico>
              }
            />
            <Btn
              className="ml-auto pl-[3px] gap-[3px]"
              label="Abbruch"
              icon={
                <Ico className="w-[15px] h-[15px]" vb="0 0 15 15">
                  <path d="M2 2l11 11M13 2L2 13" stroke="#555" strokeWidth="3.600" />
                </Ico>
              }
            />
          </div>
        </div>
      </div>
    </div>
  );
}
